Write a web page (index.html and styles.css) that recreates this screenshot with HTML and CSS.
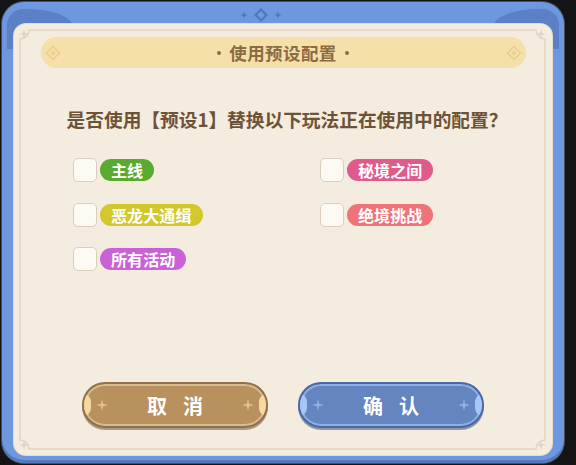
FILE: index.html
```html
<!DOCTYPE html>
<html lang="zh-CN">
<head>
<meta charset="utf-8">
<title>使用预设配置</title>
<link rel="stylesheet" href="styles.css">
</head>
<body>
<div class="frame">
  <svg class="crest" width="48" height="14" viewBox="0 0 48 14">
    <path d="M7 3.5 L8 6 L10.5 7 L8 8 L7 10.5 L6 8 L3.5 7 L6 6 Z" fill="#4f77c0"/>
    <path d="M24 1.5 L29.5 7 L24 12.5 L18.5 7 Z" fill="none" stroke="#4f77c0" stroke-width="2.2"/>
    <path d="M41 3.5 L42 6 L44.5 7 L42 8 L41 10.5 L40 8 L37.5 7 L40 6 Z" fill="#4f77c0"/>
  </svg>
  <section class="card">
    <svg class="rim" width="537" height="431" viewBox="0 0 537 431">
      <path d="M15 6 H522 A9 9 0 0 0 531 15 V416 A9 9 0 0 0 522 425 H15 A9 9 0 0 0 6 416 V15 A9 9 0 0 0 15 6 Z" fill="none" stroke="#e2d5c1" stroke-width="1.5"/>
      <g fill="#e0d2bd">
        <path d="M10 5 L11 9 L15 10 L11 11 L10 15 L9 11 L5 10 L9 9 Z"/>
        <path d="M527 5 L528 9 L532 10 L528 11 L527 15 L526 11 L522 10 L526 9 Z"/>
        <path d="M10 416 L11 420 L15 421 L11 422 L10 426 L9 422 L5 421 L9 420 Z"/>
        <path d="M527 416 L528 420 L532 421 L528 422 L527 426 L526 422 L522 421 L526 420 Z"/>
      </g>
    </svg>

    <header class="title">
      <svg class="gem" width="16" height="16" viewBox="0 0 16 16"><path d="M8 1.5 L14.5 8 L8 14.5 L1.5 8 Z" fill="none" stroke="#ebcd8c" stroke-width="1.5"/><path d="M8 5.5 L10.5 8 L8 10.5 L5.5 8 Z" fill="#ebcd8c"/></svg>
      <h1 class="title-text"><span class="dot"></span>使用预设配置<span class="dot"></span></h1>
      <svg class="gem" width="16" height="16" viewBox="0 0 16 16"><path d="M8 1.5 L14.5 8 L8 14.5 L1.5 8 Z" fill="none" stroke="#ebcd8c" stroke-width="1.5"/><path d="M8 5.5 L10.5 8 L8 10.5 L5.5 8 Z" fill="#ebcd8c"/></svg>
    </header>

    <p class="question">是否使用【预设1】替换以下玩法正在使用中的配置？</p>

    <ul class="options">
      <li class="option"><span class="box"></span><span class="tag tag-green">主线</span></li>
      <li class="option"><span class="box"></span><span class="tag tag-rose">秘境之间</span></li>
      <li class="option"><span class="box"></span><span class="tag tag-yellow">恶龙大通缉</span></li>
      <li class="option"><span class="box"></span><span class="tag tag-coral">绝境挑战</span></li>
      <li class="option"><span class="box"></span><span class="tag tag-purple">所有活动</span></li>
    </ul>

    <div class="actions">
      <button class="btn btn-cancel">
        <svg class="spark" width="12" height="12" viewBox="0 0 12 12"><path d="M6 0 L7.2 4.8 L12 6 L7.2 7.2 L6 12 L4.8 7.2 L0 6 L4.8 4.8 Z"/></svg>
        <span class="label">取<i class="sp"></i>消</span>
        <svg class="spark" width="12" height="12" viewBox="0 0 12 12"><path d="M6 0 L7.2 4.8 L12 6 L7.2 7.2 L6 12 L4.8 7.2 L0 6 L4.8 4.8 Z"/></svg>
      </button>
      <button class="btn btn-ok">
        <svg class="spark" width="12" height="12" viewBox="0 0 12 12"><path d="M6 0 L7.2 4.8 L12 6 L7.2 7.2 L6 12 L4.8 7.2 L0 6 L4.8 4.8 Z"/></svg>
        <span class="label">确<i class="sp"></i>认</span>
        <svg class="spark" width="12" height="12" viewBox="0 0 12 12"><path d="M6 0 L7.2 4.8 L12 6 L7.2 7.2 L6 12 L4.8 7.2 L0 6 L4.8 4.8 Z"/></svg>
      </button>
    </div>
  </section>
</div>
</body>
</html>
```

FILE: styles.css
```css
* { box-sizing: border-box; }

html, body {
  margin: 0;
  padding: 0;
  background: #141414;
  width: 576px;
  height: 465px;
  overflow: hidden;
  font-family: "Noto Sans CJK SC", "Noto Sans", sans-serif;
}

/* blue outer frame */
.frame {
  position: relative;
  width: 562px;
  height: 461px;
  margin: 2px 0 0 2px;
  padding: 22px 12px 8px 12px;
  border-radius: 22px;
  background: #6d98e0;
  box-shadow: 0 0 0 1px #4a4f5a, inset 0 -3px 0 #5477bd;
}

/* darker shoulders on both sides of the top band */
.frame::before,
.frame::after {
  content: "";
  position: absolute;
  top: 7px;
  width: 66px;
  height: 40px;
  background: #5b80c6;
}
.frame::before {
  left: 5px;
  border-radius: 16px 46px 0 0 / 16px 18px 0 0;
}
.frame::after {
  right: 5px;
  border-radius: 46px 16px 0 0 / 18px 16px 0 0;
}

.crest {
  position: absolute;
  top: 6px;
  left: 235px;
  z-index: 2;
}

/* cream card */
.card {
  position: relative;
  z-index: 1;
  height: 100%;
  display: flex;
  flex-direction: column;
  align-items: center;
  padding: 13px 0 27px;
  background: #f3ecdf;
  border-radius: 12px;
  box-shadow: 0 0 0 1px #e4dccd;
}

.rim {
  position: absolute;
  left: 0;
  top: 0;
  pointer-events: none;
}

/* title banner */
.title {
  width: 485px;
  height: 31px;
  display: flex;
  align-items: center;
  justify-content: space-between;
  padding: 0 4px;
  border-radius: 16px;
  background: #f6e0a9;
}

.title-text {
  margin: 0;
  display: flex;
  align-items: center;
  gap: 8px;
  font-size: 17.5px;
  font-weight: 700;
  color: #8c6b44;
  letter-spacing: 0.4px;
}

.dot {
  width: 4px;
  height: 4px;
  border-radius: 50%;
  background: #8c6b44;
}

.question {
  margin: 38px 0 0 8px;
  line-height: 26px;
  font-size: 18.7px;
  font-weight: 700;
  color: #6d5336;
}

/* option checklist */
.options {
  list-style: none;
  margin: 26px 0 0;
  padding: 0 0 0 59px;
  align-self: stretch;
  display: grid;
  grid-template-columns: 247px 1fr;
  row-gap: 20.5px;
}

.option {
  display: flex;
  align-items: center;
  gap: 3px;
  height: 24px;
}

.box {
  width: 24px;
  height: 24px;
  border-radius: 5px;
  background: #fdfaf4;
  border: 1.5px solid #dbcfbc;
}

.tag {
  height: 22px;
  line-height: 22px;
  padding: 0 11px;
  border-radius: 11px;
  font-size: 16px;
  font-weight: 700;
  color: #fff;
  letter-spacing: 0.1px;
}

.tag-green  { background: #5aaa2f; }
.tag-yellow { background: #d3c82b; }
.tag-purple { background: #c862d6; }
.tag-rose   { background: #e05b8b; }
.tag-coral  { background: #ef7477; }

/* bottom buttons */
.actions {
  margin-top: auto;
  display: flex;
  gap: 30px;
}

.btn {
  position: relative;
  width: 186px;
  height: 46px;
  display: flex;
  align-items: center;
  justify-content: space-between;
  padding: 0 12px;
  border-radius: 23px;
  border: 2px solid;
  font-family: inherit;
  overflow: hidden;
}

.btn::before,
.btn::after {
  content: "";
  position: absolute;
  top: 50%;
  width: 8px;
  height: 22px;
  margin-top: -11px;
}
.btn::before { left: -1px;  border-radius: 0 11px 11px 0; }
.btn::after  { right: -1px; border-radius: 11px 0 0 11px; }

.btn-cancel {
  background: #b8915f;
  border-color: #92714a;
  box-shadow: inset 0 0 0 2px #d7bd8e, 0 2px 0 #a89a88;
}
.btn-cancel::before,
.btn-cancel::after { background: #f4d9a1; }
.btn-cancel .spark { fill: #dcc092; }

.btn-ok {
  background: #6585c1;
  border-color: #4b68a0;
  box-shadow: inset 0 0 0 2px #8fb0e6, 0 2px 0 #8e97a8;
}
.btn-ok::before,
.btn-ok::after { background: #a7c7f6; }
.btn-ok .spark { fill: #8fb0e6; }

.label {
  display: flex;
  align-items: center;
  font-size: 20px;
  font-weight: 700;
  color: #fff;
}

.sp {
  display: inline-block;
  width: 16px;
}
```
